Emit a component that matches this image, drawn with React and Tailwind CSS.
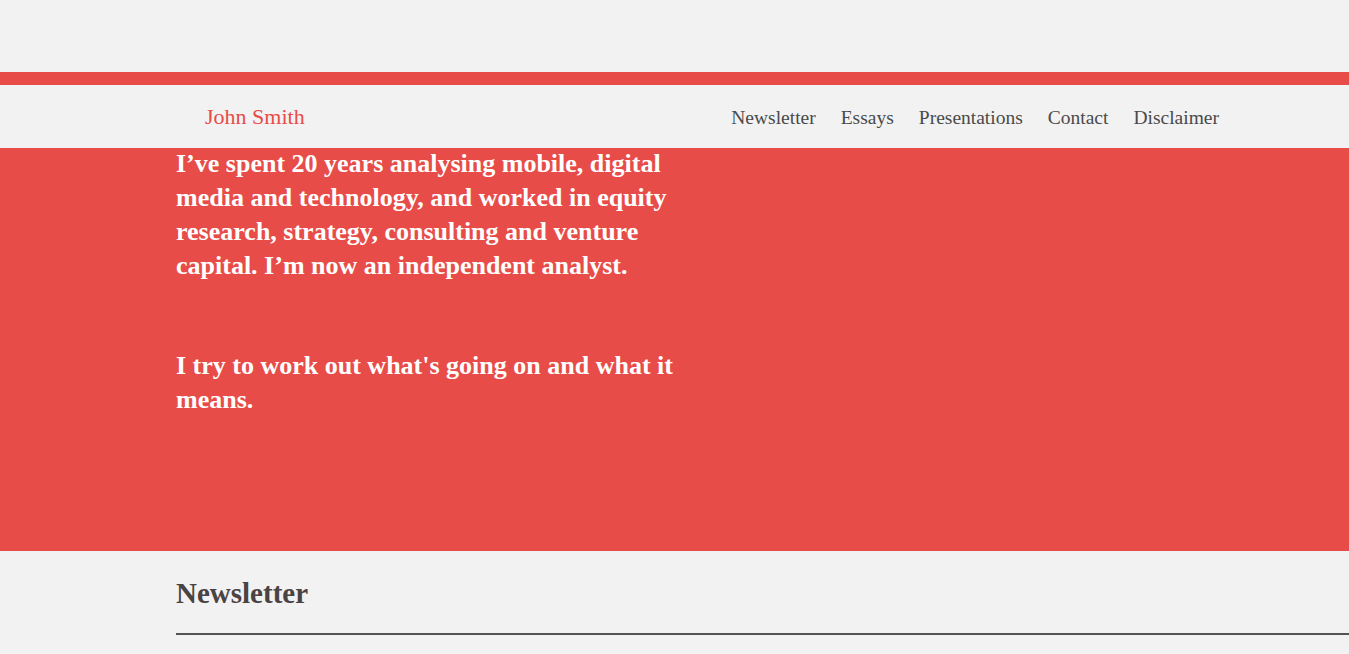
export default function App() {
  const serif = { fontFamily: '"Liberation Serif", "DejaVu Serif", serif' };
  return (
    <div className="min-h-[654px] bg-[#f2f2f2] overflow-hidden" style={serif}>
      <div className="h-[72px]" />
      <div className="h-[13px] bg-[#e84c48]" />
      <header className="h-[63px] flex items-center pl-[205px] pr-[130px]">
        <div className="text-[22px] text-[#e84c48] -mt-[1px]">John Smith</div>
        <nav className="ml-auto flex gap-[25px] text-[19.5px] text-[#4a4a4a] mt-[2px]">
          <span>Newsletter</span>
          <span>Essays</span>
          <span>Presentations</span>
          <span>Contact</span>
          <span>Disclaimer</span>
        </nav>
      </header>
      <section className="h-[403px] bg-[#e84c48] pl-[176px] flow-root">
        <div className="w-[500px] text-white font-bold text-[26px] leading-[34px] -mt-[1px]">
          <p>I’ve spent 20 years analysing mobile, digital media and technology, and worked in equity research, strategy, consulting and venture capital. I’m now an independent analyst.</p>
          <p className="mt-[66px]">I try to work out what's going on and what it means.</p>
        </div>
      </section>
      <section className="pl-[176px] pt-[26px]">
        <h2 className="text-[29px] font-bold text-[#4a4343] leading-[32px]">Newsletter</h2>
        <div className="mt-[24px] h-[2px] bg-[#555]" />
      </section>
    </div>
  );
}
